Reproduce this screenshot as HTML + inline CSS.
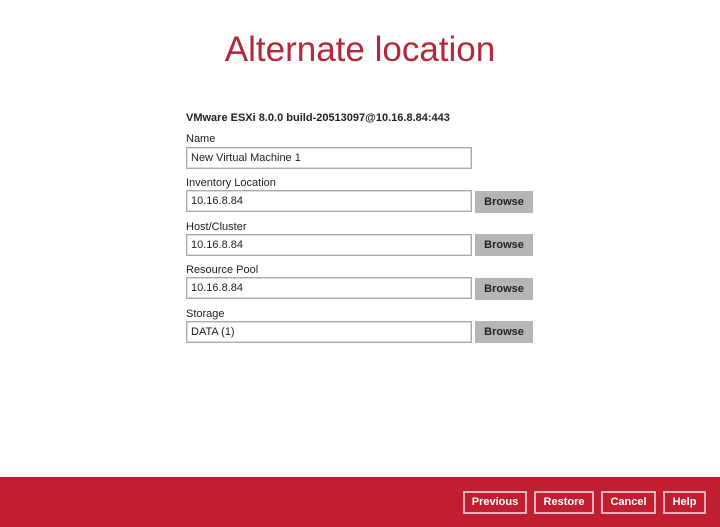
<!DOCTYPE html>
<html><head><style>
body{margin:0;width:720px;height:527px;background:#fff;font-family:"Liberation Sans",sans-serif;position:relative;overflow:hidden}
.t{position:absolute;top:30px;left:0;width:720px;text-align:center;font-size:35px;color:#b3283a;font-weight:300}
.a{position:absolute;font-size:11px;color:#222}
.in{position:absolute;left:186px;height:20px;border:1px solid #aaa;box-shadow:inset 0 0 0 1px #ddd;font-size:11px;line-height:20px;padding-left:4px;box-sizing:content-box;width:280px;color:#222}
.b{position:absolute;left:475px;width:58px;height:22px;background:#b5b5b5;font-size:11px;font-weight:bold;text-align:center;line-height:22px;color:#222}
.f{position:absolute;left:0;top:477px;width:720px;height:50px;background:#c11f31}
.fb{position:absolute;top:491px;height:19px;border:2px solid #eeb0b8;color:#fff;font-size:11px;font-weight:bold;text-align:center;line-height:19px}
</style></head><body>
<div class="t">Alternate location</div>
<div class="a" style="left:186px;top:112px;font-weight:bold">VMware ESXi 8.0.0 build-20513097@10.16.8.84:443</div>
<div class="a" style="left:186px;top:133px">Name</div>
<div class="in" style="top:147px">New Virtual Machine 1</div>
<div class="a" style="left:186px;top:177px">Inventory Location</div>
<div class="in" style="top:190px">10.16.8.84</div><div class="b" style="top:191px">Browse</div>
<div class="a" style="left:186px;top:221px">Host/Cluster</div>
<div class="in" style="top:234px">10.16.8.84</div><div class="b" style="top:234px">Browse</div>
<div class="a" style="left:186px;top:264px">Resource Pool</div>
<div class="in" style="top:277px">10.16.8.84</div><div class="b" style="top:278px">Browse</div>
<div class="a" style="left:186px;top:308px">Storage</div>
<div class="in" style="top:321px">DATA (1)</div><div class="b" style="top:321px">Browse</div>
<div class="f"></div>
<div class="fb" style="left:463px;width:60px">Previous</div>
<div class="fb" style="left:534px;width:56px">Restore</div>
<div class="fb" style="left:601px;width:51px">Cancel</div>
<div class="fb" style="left:663px;width:39px">Help</div>
</body></html>
